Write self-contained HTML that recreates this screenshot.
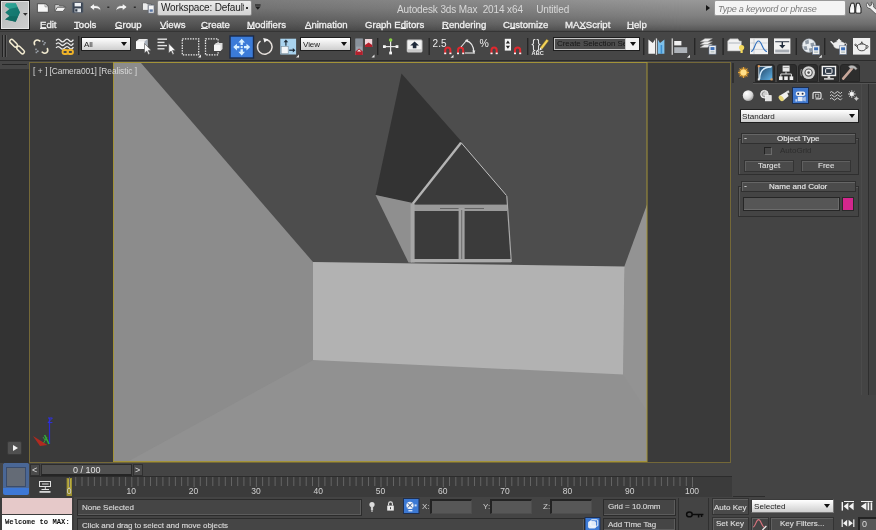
<!DOCTYPE html>
<html>
<head>
<meta charset="utf-8">
<title>Autodesk 3ds Max 2014 x64 - Untitled</title>
<style>
*{box-sizing:border-box;margin:0;padding:0}
html,body{width:876px;height:530px;overflow:hidden;background:#444}
body{font-family:"Liberation Sans",sans-serif;font-size:10px;color:#ddd;position:relative}
.abs{position:absolute}
#app{position:absolute;left:0;top:0;width:876px;height:530px;background:#444;overflow:hidden}
/* title + menu */
#titlebar{left:0;top:0;width:876px;height:32px;background:linear-gradient(#7b7b7b 0px,#737373 8px,#646464 16px,#555555 24px,#474747 30px,#3e3e3e 32px)}
#appbtn{left:0px;top:0px;width:30px;height:30px;background:linear-gradient(135deg,#b2b6b5,#c2c4c4 50%,#cfcfcf);border:1px solid #1c1c1c;box-shadow:inset 0 0 0 1px #e4e4e4}
.menu{top:19px;font-size:9.6px;letter-spacing:0;color:#f0f0f0;white-space:nowrap;line-height:12px}
.menu{z-index:3}
.menu u{text-decoration:underline;text-underline-offset:0.3px}
#ws{left:157px;top:0px;width:95px;height:15.5px;background:linear-gradient(#ececec,#d2d2d2);border:1px solid #8a8a8a;border-radius:2px;color:#1c1c1c;font-size:10px;letter-spacing:-0.15px;line-height:13px;padding-left:3px;white-space:nowrap;overflow:hidden}
#title{left:396.5px;top:3.5px;font-size:10px;letter-spacing:-0.12px;color:#d8d8d8;white-space:pre;line-height:12px}
#search{left:714px;top:0px;width:132px;height:15.5px;background:#f4f4f4;border:1px solid #999;border-radius:2px;color:#7a7a7a;font-style:italic;font-size:9px;letter-spacing:-0.2px;line-height:17px;padding-left:2.5px;white-space:nowrap;overflow:hidden}
#titlebar2{left:0;top:0;width:876px;height:32px;background:linear-gradient(#989898 0px,#8c8c8c 8px,#808080 16px,#6e6e6e 24px,#585858 30px,#454545 31px,#3e3e3e 32px);-webkit-mask-image:linear-gradient(to right,transparent 28%,#000 78%);mask-image:linear-gradient(to right,transparent 28%,#000 78%)}
.menu,#title,#vplabel,.lbl,.t{will-change:transform}
.t{display:inline-block}
.menu{-webkit-text-stroke:0.3px #f0f0f0}
.sbox .t,.btn .t,.rhead .t{-webkit-text-stroke:0.15px currentColor}
/* toolbar */
#toolbar{left:0;top:31px;width:876px;height:30px;background:#464646;border-top:1px solid #353535;border-bottom:1px solid #2b2b2b}
#tbunder{left:0;top:61px;width:876px;height:1px;background:#454545}
.dd{background:linear-gradient(#ffffff,#e2e2e2 60%,#cfcfcf);border:1px solid #1e1e1e;color:#222;font-size:8px;letter-spacing:-0.05px;line-height:13px;padding-left:2px;white-space:nowrap;overflow:hidden}
.dd:after{content:"";position:absolute;right:3px;top:4px;border-left:3px solid transparent;border-right:3px solid transparent;border-top:4px solid #111}
.sep{width:2px;background:#2a2a2a;border-right:1px solid #555}
/* viewport */
#leftstrip{left:0;top:62px;width:30px;height:401px;background:#333}
#vp{left:29px;top:62px;width:702px;height:401px;background:#3a3a3a;border:1px solid #746838}
#vplabel{left:33px;top:66px;font-size:8.4px;color:#d8d8d8;white-space:nowrap;letter-spacing:0.1px;line-height:11px}
/* command panel */
#cmd{left:733px;top:62px;width:143px;height:436px;background:#444}
.roll{border:1px solid #2f2f2f;box-shadow:inset 1px 1px 0 #5a5a5a}
.rhead{background:#4b4b4b;border:1px solid #303030;box-shadow:inset 1px 1px 0 #666;color:#e6e6e6;font-size:8px;letter-spacing:0;text-align:center;line-height:9px}
.btn{background:#4a4a4a;border:1px solid #333;box-shadow:inset 1px 1px 0 #606060;color:#dedede;font-size:8px;letter-spacing:0;text-align:center;line-height:9px}
.tab{top:64px;width:20px;height:18px;background:#2d2d2d;border:1px solid #262626;border-radius:3px 3px 0 0}
/* bottom */
.sbox{background:#454545;border:1px solid #2b2b2b;box-shadow:inset -1px -1px 0 #5c5c5c;color:#d6d6d6;font-size:8px;letter-spacing:-0.05px;line-height:12px;padding-left:4px;white-space:nowrap;overflow:hidden}
.fld{background:#575757;border-top:2px solid #232323;border-left:2px solid #232323;border-right:1px solid #4e4e4e;border-bottom:1px solid #4e4e4e}
.lbl{font-size:8px;color:#d0d0d0;line-height:10px}
.tick{font-size:8.5px;color:#cfcfcf;line-height:9px;width:30px;text-align:center}
</style>
</head>
<body>
<div id="app">

<!-- TITLE / MENU -->
<div id="titlebar" class="abs"></div>
<div id="titlebar2" class="abs"></div>
<div id="appbtn" class="abs"></div>
<div id="ws" class="abs"><div style="width:83px;overflow:hidden"><span class="t">Workspace: Default</span></div><div class="abs" style="left:88px;top:6px;width:2px;height:2px;background:#333"></div></div>
<div id="title" class="abs">Autodesk 3ds Max  2014 x64     Untitled</div>
<div id="search" class="abs"><span class="t">Type a keyword or phrase</span></div>

<div class="abs menu" style="left:40px"><u>E</u>dit</div>
<div class="abs menu" style="left:74px"><u>T</u>ools</div>
<div class="abs menu" style="left:115px"><u>G</u>roup</div>
<div class="abs menu" style="left:160px"><u>V</u>iews</div>
<div class="abs menu" style="left:201px"><u>C</u>reate</div>
<div class="abs menu" style="left:247px"><u>M</u>odifiers</div>
<div class="abs menu" style="left:305px"><u>A</u>nimation</div>
<div class="abs menu" style="left:365px">Graph E<u>d</u>itors</div>
<div class="abs menu" style="left:442px"><u>R</u>endering</div>
<div class="abs menu" style="left:503px">C<u>u</u>stomize</div>
<div class="abs menu" style="left:565px">MA<u>X</u>Script</div>
<div class="abs menu" style="left:627px"><u>H</u>elp</div>

<!-- TOOLBAR -->
<div id="toolbar" class="abs"></div>
<div id="tbunder" class="abs"></div>
<div class="abs dd" style="left:81px;top:37px;width:50px;height:14px"><span class="t">All</span></div>
<div class="abs dd" style="left:300px;top:37px;width:51px;height:14px"><span class="t">View</span></div>
<div class="abs dd" style="left:553px;top:37px;width:87px;height:14px;background:#f2f2f2;padding:0"><div class="abs" style="left:0;top:0;width:72px;height:12px;background:#4d4d4d;border:1px solid #c4c4c4;color:#161616;font-size:8px;line-height:10px;padding-left:2px;letter-spacing:-0.05px;overflow:hidden"><span class="t">Create Selection Set</span></div></div>

<svg class="abs" style="left:0;top:0;will-change:transform" width="876" height="62" viewBox="0 0 876 62">
  <defs>
    <linearGradient id="gTeal" x1="0" y1="0" x2="1" y2="1"><stop offset="0" stop-color="#2fa79a"/><stop offset="1" stop-color="#0d5f5a"/></linearGradient>
    <linearGradient id="gBox" x1="0" y1="0" x2="0" y2="1"><stop offset="0" stop-color="#ffffff"/><stop offset="1" stop-color="#d4d4d4"/></linearGradient>
    <g id="magnet"><path d="M1,7 V3.2 A2.6,2.6 0 0 1 6.2,3.2 V7" fill="none" stroke="#e0282e" stroke-width="2"/><rect x="0" y="5.6" width="2" height="1.6" fill="#f4f4f4"/><rect x="5.2" y="5.6" width="2" height="1.6" fill="#f4f4f4"/></g>
    <g id="fly"><polygon points="0,3 3,0 3,3" fill="#e8e8e8"/></g>
    <g id="doc"><rect x="0" y="0" width="7" height="8.5" fill="#f2f2f2" stroke="#6d7f99" stroke-width="0.6"/><rect x="1.5" y="1.5" width="4" height="3" fill="#3c6fb8"/><rect x="1.5" y="5.8" width="4" height="1" fill="#9aa"/></g>
  </defs>
  <!-- app logo -->
  <g>
    <polygon points="5.4,4.6 6.6,3.2 15.7,3.2 19.9,12.2 15.7,21.8 5.1,19.4 9.6,16 5.4,12.5 9.6,9 5.1,6.1" fill="url(#gTeal)"/>
    <polygon points="5.4,4.6 6.6,3.2 15.7,3.2 17.6,7.2 9.6,9 5.1,6.1" fill="#2fa596" opacity=".75"/>
    <polygon points="9.6,9 17.6,7.2 19.9,12.2 18,16.4 9.6,16 5.4,12.5" fill="#14786f" opacity=".8"/>
    <polygon points="9.6,16 18,16.4 15.7,21.8 5.1,19.4" fill="#0f6a62" opacity=".9"/>
    <polygon points="23,13 27.6,13 25.3,15.8" fill="#2e2e2e"/>
  </g>
  <!-- quick access -->
  <g>
    <path d="M37.4,3.6 H45.4 L48.4,6.4 V12.4 H37.4 Z" fill="#f6f6f6" stroke="#5c5c5c" stroke-width="1.1" stroke-linejoin="round"/>
    <path d="M45,4 V6.8 H48" fill="none" stroke="#8a8a8a" stroke-width=".8"/>
    <path d="M54.8,11.4 V4.6 H58.6 L59.6,5.8 H64 V7.4" fill="#d4d4d4" stroke="#5c5c5c" stroke-width="1" stroke-linejoin="round"/>
    <path d="M54.8,11.4 L57.4,7.2 H66 L63,11.4 Z" fill="#f4f4f4" stroke="#5c5c5c" stroke-width="1" stroke-linejoin="round"/>
    <rect x="72.4" y="2.4" width="10.6" height="10.4" rx="1" fill="#3a4452" stroke="#59626e" stroke-width=".8"/>
    <rect x="74.6" y="3" width="6.4" height="3.4" fill="#eef1f5"/>
    <rect x="74.6" y="8.4" width="6.4" height="3.8" fill="#dfe4ea"/><rect x="75.2" y="9.2" width="2.2" height="2.4" fill="#2f3946"/>
    <path d="M89.5,7 L94.5,3.3 V5.6 C98.5,5.4 101,7.2 100.8,11.4 C99.8,9.2 98,8.4 94.5,8.5 V10.8 Z" fill="#f4f4f4" stroke="#6a6a6a" stroke-width=".8"/>
    <rect x="107.3" y="6.5" width="2" height="1.5" fill="#2c2c2c"/>
    <path d="M127.3,7 L122.3,3.3 V5.6 C118.3,5.4 115.8,7.2 116,11.4 C117,9.2 118.8,8.4 122.3,8.5 V10.8 Z" fill="#f4f4f4" stroke="#6a6a6a" stroke-width=".8"/>
    <rect x="133.8" y="6.5" width="2" height="1.5" fill="#2c2c2c"/>
    <path d="M142.4,10.4 V2.8 H146.4 L147.4,4 H151.4 V10.4 Z" fill="#ececec" stroke="#5e5e5e" stroke-width=".9" stroke-linejoin="round"/>
    <rect x="148.2" y="5" width="6" height="8.2" rx=".6" fill="#f6f6f6" stroke="#5a6270" stroke-width=".9"/>
    <rect x="149.6" y="9.4" width="3.2" height="2.4" fill="#5a76a2"/>
    <rect x="255" y="4.4" width="5.6" height="1.2" fill="#1d1d1d"/><polygon points="255,6.6 260.6,6.6 257.8,9.8" fill="#1d1d1d"/>
    <polygon points="706,5 706,11 710,8" fill="#151515"/>
    <!-- binoculars -->
    <g fill="#f4f4f4" stroke="#1e1e1e" stroke-width="1" stroke-linejoin="round"><path d="M849.6,13 V8 L851.2,3.2 H854 L854.8,8 V13 Z"/><path d="M855.8,13 V8 L856.6,3.2 H859.4 L861,8 V13 Z"/></g>
    <rect x="850.6" y="9.4" width="3.2" height="3" fill="#ffffff"/><rect x="856.8" y="9.4" width="3.2" height="3" fill="#ffffff"/>
    <!-- wrench -->
    <path d="M867.4,2.6 a3.6,3.6 0 0 0 2.6,6 L876.5,14.6 V9.6 L873.4,6.8 a3.6,3.6 0 0 0 -2.2,-4.8 L871.6,5 L869.6,6.2 Z" fill="#f0f0f0" stroke="#4a4a4a" stroke-width=".8"/>
  </g>
  <!-- main toolbar grip -->
  <rect x="2" y="35" width="1" height="22" fill="#222"/><rect x="3" y="35" width="1" height="22" fill="#5a5a5a"/>
  <rect x="5" y="35" width="1" height="22" fill="#222"/><rect x="6" y="35" width="1" height="22" fill="#5a5a5a"/>
  <!-- link -->
  <g fill="none" stroke="#f3ecd2" stroke-width="1.5">
    <rect x="-1.9" y="-4.6" width="3.8" height="9.2" rx="1.9" transform="translate(13.6,43.2) rotate(-45)"/>
    <rect x="-1.9" y="-4.6" width="3.8" height="9.2" rx="1.9" transform="translate(20.6,50) rotate(-45)"/>
  </g>
  <!-- unlink -->
  <g fill="none" stroke="#f3ecd2" stroke-width="1.6" stroke-linecap="round">
    <path d="M34.6,44.6 C33.2,41 36.4,38.6 39.8,41"/>
    <path d="M47.4,48.6 C48.8,52.2 45.6,54.6 42.2,52.2"/>
  </g>
  <g fill="#9aa0a8"><rect x="42" y="40.5" width="1.6" height="1.6"/><rect x="44.2" y="42" width="1.6" height="1.6"/><rect x="43.2" y="43.6" width="1.6" height="1.6"/><rect x="35.2" y="48.6" width="1.6" height="1.6"/><rect x="37" y="50.4" width="1.6" height="1.6"/><rect x="35.6" y="51.6" width="1.6" height="1.6"/></g>
  <!-- bind to space warp -->
  <g fill="none" stroke="#ececec" stroke-width="1.3">
    <path d="M56,40.5 q2.2,-2.6 4.4,0 t4.4,0 t4.4,0 t4.2,-0.8"/>
    <path d="M56,44.2 q2.2,-2.6 4.4,0 t4.4,0 t4.4,0 t4.2,-0.8"/>
    <path d="M56,47.9 q2.2,-2.6 4.4,0 t4.4,0 t4.4,0 t4.2,-0.8"/>
  </g>
  <g fill="none" stroke="#f0b429" stroke-width="1.8"><rect x="62.5" y="50" width="5.5" height="4" rx="2"/><rect x="67.5" y="50" width="5.5" height="4" rx="2"/></g>
  <rect x="78" y="36" width="1.4" height="19" fill="#262626"/>
  <!-- select object -->
  <g>
    <polygon points="136,41.5 139,39 147.5,39 147.5,46.5 144.5,49 136,49" fill="#e9e9e9"/>
    <polygon points="136,41.5 144.5,41.5 144.5,49 136,49" fill="#f8f8f8"/>
    <polygon points="144.5,41.5 147.5,39 147.5,46.5 144.5,49" fill="#aab2bd"/>
    <polygon points="144.5,43.5 144.5,53 146.8,51 148.4,54.4 149.8,53.7 148.2,50.4 151,50.2" fill="#fafafa" stroke="#555" stroke-width=".6"/>
  </g>
  <!-- select by name -->
  <g fill="#e4e4e4"><rect x="157.5" y="38.5" width="9.5" height="1.4"/><rect x="157.5" y="41.7" width="7" height="1.4"/><rect x="157.5" y="44.9" width="9.5" height="1.4"/><rect x="157.5" y="48.1" width="7" height="1.4"/></g>
  <polygon points="168.8,43.5 168.8,53 171.1,51 172.7,54.4 174.1,53.7 172.5,50.4 175.3,50.2" fill="#fafafa" stroke="#555" stroke-width=".6"/>
  <!-- rect region -->
  <rect x="182.3" y="38.8" width="16.4" height="16" fill="none" stroke="#efefef" stroke-width="1.3" stroke-dasharray="1.4 1.2"/>
  <use href="#fly" x="198" y="54.5"/>
  <!-- window crossing -->
  <rect x="205.5" y="38.8" width="12.6" height="16" fill="none" stroke="#efefef" stroke-width="1.3" stroke-dasharray="1.4 1.2"/>
  <polygon points="214,45 216,43 222.5,43 222.5,49 220.5,51 214,51" fill="#dcdcdc"/><rect x="214" y="45" width="6.5" height="6" fill="#f6f6f6"/>
  <!-- move (active) -->
  <rect x="230" y="36" width="23.5" height="22" fill="#3b7bd8" stroke="#1b2a48" stroke-width="1.4"/>
  <g fill="#d9f1ff">
    <polygon points="241.7,38.8 245,42.5 242.9,42.5 242.9,45 240.5,45 240.5,42.5 238.4,42.5"/>
    <polygon points="241.7,55.4 245,51.7 242.9,51.7 242.9,49.2 240.5,49.2 240.5,51.7 238.4,51.7"/>
    <polygon points="233.2,47.1 236.9,43.8 236.9,45.9 239.4,45.9 239.4,48.3 236.9,48.3 236.9,50.4"/>
    <polygon points="250.2,47.1 246.5,43.8 246.5,45.9 244,45.9 244,48.3 246.5,48.3 246.5,50.4"/>
    <rect x="240.7" y="46.1" width="2" height="2"/>
  </g>
  <!-- rotate -->
  <path d="M266.5,39.8 A7.3,7.3 0 1 1 260.5,41" fill="none" stroke="#e6e0dc" stroke-width="1.5"/>
  <polygon points="263.2,38 268.6,39.3 264.4,42.6" fill="#f4f4f4"/>
  <!-- scale -->
  <rect x="280.3" y="38.7" width="15.8" height="15.8" fill="#a9d3ee"/>
  <rect x="281.2" y="46.5" width="7" height="7.2" fill="#f3f6f8" stroke="#7d8f9c" stroke-width=".6"/>
  <g fill="#1e2a36"><rect x="285.3" y="41.5" width="1.2" height="4.2"/><polygon points="283.6,42.2 285.9,39.6 288.2,42.2"/><rect x="289.2" y="49.6" width="4.2" height="1.2"/><polygon points="292.8,47.9 295.4,50.2 292.8,52.5"/></g>
  <use href="#fly" x="296" y="54.5"/>
  <!-- use pivot center -->
  <rect x="355.4" y="38.6" width="7.4" height="16.4" fill="#9aa3ad"/><rect x="355.4" y="38.6" width="7.4" height="8" fill="#7e8791" opacity=".6"/>
  <polygon points="355.4,55 355.4,51.5 359.1,48.5 362.8,51.5 362.8,55" fill="#b3202c"/><polygon points="357,51.5 359.1,49.6 361.2,51.5" fill="#f2f2f2"/>
  <rect x="365" y="39" width="7.2" height="8" fill="#f0d5da"/><polygon points="365,47 365,45 368.6,42.5 372.2,45 372.2,47" fill="#b3202c"/>
  <use href="#fly" x="371.5" y="54.5"/>
  <rect x="377" y="38" width="1.4" height="17" fill="#262626"/>
  <!-- manipulate -->
  <g stroke="#e8e8e8" stroke-width="1.2"><line x1="384" y1="46.6" x2="397.5" y2="46.6"/><line x1="390.6" y1="40" x2="390.6" y2="53.5"/></g>
  <g fill="#f6f6f6"><rect x="383" y="45.2" width="2.8" height="2.8"/><rect x="395.6" y="45.2" width="2.8" height="2.8"/><rect x="389.2" y="51.6" width="2.8" height="2.8"/></g>
  <circle cx="390.6" cy="40" r="1.8" fill="#8bd14a"/>
  <!-- keyboard shortcut override -->
  <rect x="407" y="39.8" width="15.2" height="12.4" rx="1.2" fill="#f2f2f2" stroke="#9a9a9a" stroke-width=".8"/><rect x="407.4" y="49.2" width="14.4" height="2.6" fill="#c9c9c9"/>
  <polygon points="414.6,41.6 419,45.6 416.4,45.6 416.4,48.2 412.8,48.2 412.8,45.6 410.2,45.6" fill="#1f2a3a"/>
  <rect x="428.5" y="38" width="1.4" height="17" fill="#262626"/>
  <!-- snaps -->
  <text x="432.6" y="46.6" font-family="Liberation Sans, sans-serif" font-size="10" fill="#ececec">2.5</text>
  <use href="#magnet" x="444.2" y="47"/>
  <use href="#fly" x="450.5" y="54.8"/>
  <use href="#magnet" x="457" y="47"/>
  <g fill="none" stroke="#e8e8e8" stroke-width="1.1"><path d="M461,47 L467.3,39.5"/><path d="M465,53 H475"/><path d="M466.2,40.6 C471,42 473.6,46.5 473.8,52"/></g><polygon points="472.2,50.6 475.4,50.6 473.8,53.4" fill="#e8e8e8"/><polygon points="465,40 468.4,39.6 467.4,42.4" fill="#e8e8e8"/>
  <text x="479.6" y="47" font-family="Liberation Sans, sans-serif" font-size="10.5" fill="#ececec">%</text>
  <use href="#magnet" x="490.5" y="47"/>
  <rect x="504.8" y="38.8" width="6.2" height="11.8" fill="#f4f4f4"/>
  <polygon points="505.8,43.6 510,43.6 507.9,40.6" fill="#222"/><polygon points="505.8,45.8 510,45.8 507.9,48.8" fill="#222"/>
  <use href="#magnet" x="514" y="47"/>
  <rect x="527" y="38" width="1.4" height="17" fill="#262626"/>
  <!-- named selection sets -->
  <text x="531.4" y="48" font-family="Liberation Sans, sans-serif" font-size="12" fill="#ececec" letter-spacing="1">{}</text>
  <text x="531.6" y="55.4" font-family="Liberation Sans, sans-serif" font-size="5.6" font-weight="bold" fill="#ececec">ABC</text>
  <path d="M540.2,47.6 L546.6,39.2 L548.6,40.8 L542.2,49.2 Z" fill="#f2d35a" stroke="#8a6f1c" stroke-width=".4"/><polygon points="540.2,47.6 542.2,49.2 539.4,50.4" fill="#f4f4f4"/>
  <rect x="643" y="38" width="1.4" height="17" fill="#262626"/>
  <!-- mirror -->
  <polygon points="648.4,39.4 652.8,43 655,39.4 655,53.8 648.4,53.8" fill="#f2f2f2"/>
  <rect x="655.8" y="38.4" width="1.3" height="16.4" fill="#d8d8d8"/>
  <polygon points="664.4,39.4 660,43 657.8,39.4 657.8,53.8 664.4,53.8" fill="#7ec0ea"/><rect x="660.6" y="45" width="1.6" height="8.8" fill="#3d8fcf"/>
  <!-- align -->
  <rect x="671.6" y="38.4" width="1.3" height="16.4" fill="#d0d0d0"/>
  <rect x="674.2" y="41" width="7.2" height="4.4" fill="#f1f1f1"/><rect x="674.2" y="47.2" width="13" height="5.8" fill="#aeb3b9"/>
  <use href="#fly" x="687" y="54.8"/>
  <rect x="694" y="38" width="1.4" height="17" fill="#262626"/>
  <!-- layers -->
  <g fill="#f0f0f0" stroke="#8c8c8c" stroke-width=".5"><polygon points="700,47.4 705,44.2 712.4,44.2 707.4,47.4"/><polygon points="700,44.6 705,41.4 712.4,41.4 707.4,44.6"/><polygon points="700,41.8 705,38.6 712.4,38.6 707.4,41.8"/></g>
  <use href="#doc" x="709" y="45.6"/>
  <rect x="722.4" y="38" width="1.4" height="17" fill="#262626"/>
  <!-- ribbon -->
  <path d="M727.6,51 V41 L730,38.8 H738 L739.4,41 H741.4 V51 Z" fill="#f1f1f1" stroke="#9a9a9a" stroke-width=".6"/><rect x="728.6" y="42.4" width="11.8" height="1.2" fill="#b9bec6"/>
  <circle cx="741.6" cy="47.6" r="2.6" fill="#f4d95c"/><rect x="740.5" y="49.8" width="2.2" height="3.2" fill="#f4d95c"/>
  <!-- curve editor -->
  <rect x="750" y="38.2" width="18" height="16" fill="#f1f1f1"/>
  <g stroke="#b7bcc4" stroke-width=".6"><line x1="754" y1="38.6" x2="754" y2="54"/><line x1="750.4" y1="43" x2="767.6" y2="43"/><line x1="750.4" y1="49.4" x2="767.6" y2="49.4"/></g>
  <path d="M751,51.5 C754.5,51.5 755,41 758.5,41 C762,41 762.5,51.5 767,51.5" fill="none" stroke="#2f6fbe" stroke-width="1.1"/>
  <!-- schematic -->
  <rect x="774" y="38.4" width="16.4" height="15.4" fill="#f1f1f1"/>
  <rect x="775.2" y="41" width="14" height="1.3" fill="#59606c"/><rect x="775.2" y="49.6" width="14" height="2.8" fill="#a7acb3"/><rect x="781.6" y="42" width="1.4" height="3.4" fill="#1f2a3a"/><polygon points="779.2,45 785.4,45 782.3,48.4" fill="#1f2a3a"/>
  <rect x="795.6" y="38" width="1.4" height="17" fill="#262626"/>
  <!-- material editor -->
  <circle cx="809" cy="45.6" r="6.8" fill="#e9edf1" stroke="#9aa3ad" stroke-width=".6"/>
  <g fill="#8f9aa6"><polygon points="805,41 808.6,39.6 809,43.4 805.6,44.6"/><polygon points="810.4,43.2 813.8,42.4 814.6,46 811,46.8"/><polygon points="803.4,46.4 806.6,46 807.6,49.8 804.6,50"/><polygon points="808.8,48.4 812,48 812.6,51.4 809.6,52"/></g>
  <use href="#doc" x="812.6" y="45.8"/>
  <use href="#fly" x="818.8" y="54.8"/>
  <rect x="824" y="38" width="1.4" height="17" fill="#262626"/>
  <!-- render setup teapot -->
  <g id="teapot"><path d="M833.4,44.6 C833,42.6 835.6,41.6 839,41.6 C842.4,41.6 845,42.6 844.6,44.6 C844.6,47.2 843,48.8 839,48.8 C835,48.8 833.4,47.2 833.4,44.6 Z" fill="#eeeeee" stroke="#9a9a9a" stroke-width=".5"/><path d="M833.6,45.4 L830,41.6 L831.4,41 L834.2,43.4 Z" fill="#eeeeee"/><path d="M844.4,43.4 C847.4,42.4 847.4,46.6 844,46.6" fill="none" stroke="#eeeeee" stroke-width="1"/><ellipse cx="839" cy="41" rx="2.6" ry="1" fill="#f6f6f6"/><circle cx="839" cy="39.6" r=".9" fill="#f6f6f6"/></g>
  <use href="#doc" x="839.6" y="45.8"/>
  <!-- rendered frame window -->
  <rect x="853" y="38" width="17.2" height="16.6" fill="#efefef"/>
  <g fill="none" stroke="#3a3a3a" stroke-width=".9"><path d="M857.4,46.6 C857,44.8 859.2,44 861.8,44 C864.4,44 866.6,44.8 866.2,46.6 C866.2,49.2 864.8,50.8 861.8,50.8 C858.8,50.8 857.4,49.2 857.4,46.6 Z"/><path d="M857.4,47 L854.6,44.8 L855.4,44.2 L857.6,45.6"/><path d="M866.2,45.6 C868.8,44.8 868.8,48.4 866,48.4"/><path d="M860.2,43.8 Q861.8,42 863.4,43.8"/></g>
  <circle cx="861.8" cy="42.2" r=".8" fill="#3a3a3a"/>
</svg>

<!-- VIEWPORT -->
<div id="leftstrip" class="abs"></div>
<div class="abs" style="left:0;top:61px;width:29px;height:8px;background:#464646"></div>
<div class="abs" style="left:2px;top:64px;width:25px;height:1px;background:#262626"></div>
<div class="abs" style="left:7px;top:441px;width:15px;height:14px;background:#505050;border:1px solid #3a3a3a;border-radius:2px"></div>
<div class="abs" style="left:13px;top:445px;width:0;height:0;border-left:5px solid #f2f2f2;border-top:3.5px solid transparent;border-bottom:3.5px solid transparent"></div>
<div id="vp" class="abs"></div>
<svg class="abs" style="left:0;top:0" width="876" height="530" viewBox="0 0 876 530">
  <g id="scene">
    <rect x="114" y="63" width="533" height="398" fill="#4d4d4d"/>
    <!-- floor (extended under walls) -->
    <polygon points="114,461 114,400 313,300 647,300 647,461" fill="#919191"/>
    <!-- left wall -->
    <polygon points="114,63 141,63 313,262 313.5,360 129,461 114,461" fill="#8c8c8c"/>
    <!-- back wall -->
    <polygon points="313,262 625,266.5 623.5,374.5 313,360" fill="#b2b2b2"/>
    <!-- right wall -->
    <polygon points="647,204.5 624.5,266 623,374.5 647,411.5" fill="#939393"/>
    <!-- dormer -->
    <polygon points="401.5,73.5 461.5,141.5 413,204 375.5,195" fill="#333333"/>
    <polygon points="375.5,195 413,203 412,262.5 408.5,262.5" fill="#8f8f8f"/>
    <polygon points="461,142 506.5,195.5 511.5,262.2 411,262.2 412,203" fill="#3b3b3b"/>
    <polyline points="412.6,204 461,142.8" fill="none" stroke="#b4b4b4" stroke-width="2.4"/>
    <polyline points="461,142.5 506.5,195.5" fill="none" stroke="#c2c2c2" stroke-width="1"/>
    <polyline points="506.8,196 511.3,262" fill="none" stroke="#a8a8a8" stroke-width="1.2"/>
    <rect x="411" y="204.6" width="96" height="6.4" fill="#9a9a9a"/>
    <rect x="440" y="208" width="44" height="1" fill="#646464"/>
    <rect x="410.6" y="204" width="4" height="58.4" fill="#a6a6a6"/>
    <rect x="458.6" y="208" width="6" height="54" fill="#a2a2a2"/>
    <rect x="461.2" y="210" width="1" height="50" fill="#6a6a6a"/>
    <rect x="411" y="259" width="100" height="3.4" fill="#ababab"/>
  </g>
  <g id="gizmo">
    <line x1="49.5" y1="418" x2="49.5" y2="444" stroke="#2a2ad0" stroke-width="1.2"/>
    <path d="M48,418 H52.4 L48,422.6 H52.4" fill="none" stroke="#3030e0" stroke-width="1"/>
    <polygon points="33,436 47.5,445 40,446" fill="#b02a20"/>
    <line x1="49" y1="444" x2="44.6" y2="435" stroke="#2fae3a" stroke-width="1.6"/>
    <path d="M43,437 L45,440 M47,437 L43.6,443" stroke="#2fae3a" stroke-width=".9" fill="none"/>
  </g>
  <!-- safe frame -->
  <rect x="113.5" y="62.5" width="533.5" height="399" fill="none" stroke="#a39338" stroke-width="1"/>
</svg>
<div id="vplabel" class="abs"><span class="abs" style="left:0">[ + ]</span><span class="abs" style="left:16.5px;letter-spacing:-0.1px">[Camera001]</span><span class="abs" style="left:66px;letter-spacing:-0.05px">[Realistic ]</span></div>

<!-- COMMAND PANEL -->
<div id="cmd" class="abs"></div>

<!-- command panel tabs -->
<div class="abs" style="left:753px;top:82px;width:123px;height:1px;background:#2b2b2b"></div>
<div class="abs" style="left:753px;top:83px;width:123px;height:1px;background:#555"></div>
<div class="abs" style="left:732px;top:63px;width:2px;height:20px;background:#303030"></div>
<div class="abs" style="left:861px;top:84px;width:1px;height:311px;background:#4b4b4b"></div>
<div class="abs" style="left:868px;top:84px;width:1px;height:311px;background:#2e2e2e"></div>
<div class="abs" style="left:869px;top:84px;width:7px;height:311px;background:#414141"></div>
<div class="abs tab" style="left:755px"></div>
<div class="abs tab" style="left:777px"></div>
<div class="abs tab" style="left:798px"></div>
<div class="abs tab" style="left:819px"></div>
<div class="abs tab" style="left:840px"></div>
<div class="abs" style="left:792px;top:87px;width:17px;height:17px;background:#4179cf;border:1px solid #1d2e4e"></div>
<svg class="abs" style="left:730px;top:58px" width="146" height="50" viewBox="730 58 146 50">
  <defs>
    <radialGradient id="gStar"><stop offset="0" stop-color="#fff1b0"/><stop offset=".45" stop-color="#f2b43a"/><stop offset="1" stop-color="#c8801c" stop-opacity=".0"/></radialGradient>
    <radialGradient id="gSph" cx=".35" cy=".3" r=".8"><stop offset="0" stop-color="#ffffff"/><stop offset=".6" stop-color="#dcdcdc"/><stop offset="1" stop-color="#8f8f8f"/></radialGradient>
    <linearGradient id="gCurve" x1="0" y1="0" x2="1" y2="1"><stop offset="0" stop-color="#1c3b5a"/><stop offset="1" stop-color="#5fb2e6"/></linearGradient>
  </defs>
  <!-- create (star) -->
  <circle cx="743.5" cy="72.5" r="6" fill="url(#gStar)"/>
  <g stroke="#eea93a" stroke-width="1" opacity=".9"><line x1="743.5" y1="67" x2="743.5" y2="78"/><line x1="738" y1="72.5" x2="749" y2="72.5"/><line x1="739.6" y1="68.6" x2="747.4" y2="76.4"/><line x1="747.4" y1="68.6" x2="739.6" y2="76.4"/></g>
  <circle cx="743.5" cy="72.5" r="3" fill="#ffe08a"/>
  <!-- modify -->
  <rect x="758.4" y="66" width="14" height="14" fill="url(#gCurve)"/>
  <path d="M759.6,79 C759.6,71 764,67 771.4,67" fill="none" stroke="#d9efff" stroke-width="1.4"/>
  <path d="M758.8,66.4 H772 M758.8,66.4 V79.6" stroke="#e9e9e9" stroke-width=".8" fill="none"/>
  <rect x="757.8" y="65.2" width="2" height="2" fill="#e8a05a"/><rect x="770.6" y="78.4" width="2" height="2" fill="#e8a05a"/><rect x="757.8" y="78.4" width="2" height="2" fill="#eee"/>
  <!-- hierarchy -->
  <rect x="782.6" y="65.6" width="7" height="6" fill="#e6e6e6"/><rect x="783.4" y="67" width="5.4" height=".9" fill="#999"/>
  <g stroke="#dcdcdc" stroke-width="1" fill="none"><path d="M786,71.6 V74 M780.8,77 V74 H791.4 V77"/></g>
  <g fill="#ededed"><rect x="779" y="76.4" width="3.6" height="3.6"/><rect x="784.2" y="76.4" width="3.6" height="3.6"/><rect x="789.6" y="76.4" width="3.6" height="3.6"/></g>
  <!-- motion -->
  <circle cx="808.6" cy="72.6" r="6.4" fill="#d2d2d2"/><circle cx="808.6" cy="72.6" r="4.2" fill="#5a5a5a"/><circle cx="808.6" cy="72.6" r="3" fill="#ededed"/><circle cx="808.6" cy="72.6" r="1.3" fill="#555"/>
  <path d="M801.4,69 Q799.6,72.6 801.4,76.2" stroke="#9a9a9a" stroke-width=".8" fill="none"/>
  <!-- display -->
  <rect x="821.6" y="65.8" width="14.6" height="10.4" fill="#f0f0f0"/><rect x="823" y="67.2" width="11.8" height="7.6" fill="#2f3a48"/>
  <rect x="825.6" y="68.6" width="6.4" height="4.8" rx="1" fill="none" stroke="#f0f0f0" stroke-width="1"/>
  <rect x="827.6" y="76.2" width="2.6" height="2" fill="#dcdcdc"/><rect x="824" y="78.2" width="9.8" height="1.4" fill="#e6e6e6"/>
  <!-- utilities (hammer) -->
  <path d="M843.2,78.6 L852.2,68.2" stroke="#c8a79a" stroke-width="2.6" stroke-linecap="round"/>
  <path d="M848.6,66.4 C851.4,64.6 855.4,65.6 857.2,68.8 L855.4,69.8 C854.2,68 852.4,67.6 850.4,68.6 Z" fill="#bcbcbc" stroke="#8a8a8a" stroke-width=".5"/>
  <!-- sub row: geometry -->
  <circle cx="748.2" cy="95.6" r="5.4" fill="url(#gSph)"/>
  <!-- shapes -->
  <circle cx="764.4" cy="94.2" r="3.8" fill="#cfcfcf" stroke="#f0f0f0" stroke-width="1"/><path d="M764.6,91.8 a2.4,2.4 0 1 0 2,3.8" fill="none" stroke="#8a8a8a" stroke-width=".9"/>
  <rect x="765.6" y="95.6" width="5.6" height="5.2" fill="#e2e2e2" stroke="#f6f6f6" stroke-width=".8"/>
  <!-- lights -->
  <path d="M779,96 L786.6,91.4 L788.6,96 L783.4,100.6 Z" fill="#f1f1f1"/><ellipse cx="781.2" cy="98.4" rx="2" ry="3.2" transform="rotate(-40 781.2 98.4)" fill="#e6d678"/><path d="M786.2,91.6 L788.4,90.2 L789.6,92.2 L787.6,93.6 Z" fill="#dcdcdc"/>
  <!-- cameras (active) -->
  <rect x="795.8" y="91.6" width="9.4" height="4.4" rx="1.8" fill="#f2f2f2"/><circle cx="798.2" cy="93.8" r="1" fill="#1c2f58"/><circle cx="802.6" cy="93.8" r="1" fill="#1c2f58"/>
  <rect x="797.8" y="96.8" width="4.8" height="4.4" fill="#e4ebf6"/><polygon points="802.8,97.8 805.8,96.6 805.8,101.4 802.8,100.4" fill="#a9c0e6"/><rect x="795.4" y="99.2" width="1.8" height="2.4" fill="#c3d3ee"/>
  <!-- helpers -->
  <path d="M813,99 V93.8 Q813,92.4 814.4,92.4 H819.4 Q821,92.4 821,94 V97.2 Q821,98.8 819.4,98.8 H815.6" fill="none" stroke="#e0e0e0" stroke-width="1.2"/><rect x="815.4" y="94.2" width="3.4" height="3" fill="none" stroke="#b8b8b8" stroke-width=".8"/><rect x="822.2" y="98.6" width="1.1" height="1.1" fill="#c4c4c4"/>
  <!-- space warps -->
  <g fill="none" stroke="#cdcdcd" stroke-width="1"><path d="M830,92.6 q1.5,-2.2 3,0 t3,0 t3,0 t3,-0.6"/><path d="M830,95.8 q1.5,-2.2 3,0 t3,0 t3,0 t3,-0.6"/><path d="M830,99 q1.5,-2.2 3,0 t3,0 t3,0 t3,-0.6"/></g>
  <!-- systems -->
  <g stroke="#e2e2e2" stroke-width=".9"><line x1="851.8" y1="90.2" x2="851.8" y2="97.8"/><line x1="848" y1="94" x2="855.6" y2="94"/><line x1="849.1" y1="91.3" x2="854.5" y2="96.7"/><line x1="854.5" y1="91.3" x2="849.1" y2="96.7"/></g><circle cx="851.8" cy="94" r="2" fill="#f4f4f4"/>
  <circle cx="856.4" cy="98.6" r="1.5" fill="#d2d2d2"/><g stroke="#cacaca" stroke-width=".7"><line x1="856.4" y1="96.2" x2="856.4" y2="101"/><line x1="854" y1="98.6" x2="858.8" y2="98.6"/></g>
</svg>
<div class="abs dd" style="left:740px;top:109px;width:119px;height:14px;font-size:8.1px;letter-spacing:0;line-height:13px;padding-left:1px"><span class="t">Standard</span></div>
<!-- Object Type rollout -->
<div class="abs roll" style="left:738px;top:138px;width:121px;height:37px"></div>
<div class="abs rhead" style="left:741px;top:133px;width:115px;height:11px"><span class="t">Object Type</span></div>
<div class="abs" style="left:744px;top:133px;font-size:9px;line-height:10px;color:#e6e6e6">-</div>
<div class="abs" style="left:764px;top:147px;width:8px;height:8px;background:#484848;border:1px solid #222;border-right-color:#6a6a6a;border-bottom-color:#6a6a6a"></div>
<div class="abs" style="left:780px;top:146px;font-size:8px;letter-spacing:0;line-height:10px;color:#2d2d2d;will-change:transform">AutoGrid</div>
<div class="abs btn" style="left:744px;top:160px;width:50px;height:12px"><span class="t">Target</span></div>
<div class="abs btn" style="left:801px;top:160px;width:50px;height:12px"><span class="t">Free</span></div>
<!-- Name and Color rollout -->
<div class="abs roll" style="left:738px;top:186px;width:121px;height:31px"></div>
<div class="abs rhead" style="left:741px;top:181px;width:115px;height:11px"><span class="t">Name and Color</span></div>
<div class="abs" style="left:744px;top:181px;font-size:9px;line-height:10px;color:#e6e6e6">-</div>
<div class="abs" style="left:743px;top:197px;width:97px;height:14px;background:#565656;border:1px solid #262626;box-shadow:inset -1px -1px 0 #6c6c6c"></div>
<div class="abs" style="left:842px;top:197px;width:12px;height:14px;background:#d3278d;border:1px solid #2a2a2a"></div>

<!-- BOTTOM -->
<!-- time slider -->
<div class="abs" style="left:0;top:463px;width:733px;height:35px;background:#444"></div>
<div class="abs" style="left:3px;top:463px;width:26px;height:32px;background:#3e78d6;border-radius:3px 3px 2px 2px"></div>
<div class="abs" style="left:3px;top:463px;width:26px;height:25px;background:#4a6796;border-radius:3px 3px 0 0"></div>
<div class="abs" style="left:6px;top:467px;width:20px;height:20px;background:#646b76;border:1px solid #3a4c6c"></div>
<div class="abs" style="left:30px;top:464px;width:10px;height:12px;background:#4a4a4a;border:1px solid #303030;color:#ddd;font-size:9px;line-height:10px;text-align:center"><span class="t">&lt;</span></div>
<div class="abs" style="left:41px;top:464px;width:91px;height:12px;background:#515151;border:1px solid #2c2c2c;border-bottom:2px solid #252525;color:#e2e2e2;font-size:9px;line-height:11px;text-align:center"><span class="t">0 / 100</span></div>
<div class="abs" style="left:133px;top:464px;width:10px;height:12px;background:#4a4a4a;border:1px solid #303030;color:#ddd;font-size:9px;line-height:10px;text-align:center"><span class="t">&gt;</span></div>
<div class="abs" style="left:30px;top:476px;width:702px;height:21px;background:#3b3b3b;border-top:1px solid #2c2c2c"></div>
<svg class="abs" style="left:0;top:462px;will-change:transform" width="876" height="68" viewBox="0 462 876 68" font-family="Liberation Sans, sans-serif" font-size="8.5" fill="#d2d2d2">
  <rect x="66.6" y="478" width="5.4" height="18" fill="#9b8f2e"/><rect x="67.6" y="479" width="3.4" height="9" fill="#b8ab45"/>
  <rect x="69.0" y="477" width="1" height="10" fill="#646464"/><rect x="75.2" y="477" width="1" height="9" fill="#646464"/><rect x="81.5" y="477" width="1" height="9" fill="#646464"/><rect x="87.7" y="477" width="1" height="9" fill="#646464"/><rect x="93.9" y="477" width="1" height="9" fill="#646464"/><rect x="100.2" y="477" width="1" height="9" fill="#646464"/><rect x="106.4" y="477" width="1" height="9" fill="#646464"/><rect x="112.6" y="477" width="1" height="9" fill="#646464"/><rect x="118.8" y="477" width="1" height="9" fill="#646464"/><rect x="125.1" y="477" width="1" height="9" fill="#646464"/><rect x="131.3" y="477" width="1" height="10" fill="#646464"/><rect x="137.5" y="477" width="1" height="9" fill="#646464"/><rect x="143.8" y="477" width="1" height="9" fill="#646464"/><rect x="150.0" y="477" width="1" height="9" fill="#646464"/><rect x="156.2" y="477" width="1" height="9" fill="#646464"/><rect x="162.4" y="477" width="1" height="9" fill="#646464"/><rect x="168.7" y="477" width="1" height="9" fill="#646464"/><rect x="174.9" y="477" width="1" height="9" fill="#646464"/><rect x="181.1" y="477" width="1" height="9" fill="#646464"/><rect x="187.4" y="477" width="1" height="9" fill="#646464"/><rect x="193.6" y="477" width="1" height="10" fill="#646464"/><rect x="199.8" y="477" width="1" height="9" fill="#646464"/><rect x="206.1" y="477" width="1" height="9" fill="#646464"/><rect x="212.3" y="477" width="1" height="9" fill="#646464"/><rect x="218.5" y="477" width="1" height="9" fill="#646464"/><rect x="224.8" y="477" width="1" height="9" fill="#646464"/><rect x="231.0" y="477" width="1" height="9" fill="#646464"/><rect x="237.2" y="477" width="1" height="9" fill="#646464"/><rect x="243.4" y="477" width="1" height="9" fill="#646464"/><rect x="249.7" y="477" width="1" height="9" fill="#646464"/><rect x="255.9" y="477" width="1" height="10" fill="#646464"/><rect x="262.1" y="477" width="1" height="9" fill="#646464"/><rect x="268.4" y="477" width="1" height="9" fill="#646464"/><rect x="274.6" y="477" width="1" height="9" fill="#646464"/><rect x="280.8" y="477" width="1" height="9" fill="#646464"/><rect x="287.1" y="477" width="1" height="9" fill="#646464"/><rect x="293.3" y="477" width="1" height="9" fill="#646464"/><rect x="299.5" y="477" width="1" height="9" fill="#646464"/><rect x="305.7" y="477" width="1" height="9" fill="#646464"/><rect x="312.0" y="477" width="1" height="9" fill="#646464"/><rect x="318.2" y="477" width="1" height="10" fill="#646464"/><rect x="324.4" y="477" width="1" height="9" fill="#646464"/><rect x="330.7" y="477" width="1" height="9" fill="#646464"/><rect x="336.9" y="477" width="1" height="9" fill="#646464"/><rect x="343.1" y="477" width="1" height="9" fill="#646464"/><rect x="349.4" y="477" width="1" height="9" fill="#646464"/><rect x="355.6" y="477" width="1" height="9" fill="#646464"/><rect x="361.8" y="477" width="1" height="9" fill="#646464"/><rect x="368.0" y="477" width="1" height="9" fill="#646464"/><rect x="374.3" y="477" width="1" height="9" fill="#646464"/><rect x="380.5" y="477" width="1" height="10" fill="#646464"/><rect x="386.7" y="477" width="1" height="9" fill="#646464"/><rect x="393.0" y="477" width="1" height="9" fill="#646464"/><rect x="399.2" y="477" width="1" height="9" fill="#646464"/><rect x="405.4" y="477" width="1" height="9" fill="#646464"/><rect x="411.7" y="477" width="1" height="9" fill="#646464"/><rect x="417.9" y="477" width="1" height="9" fill="#646464"/><rect x="424.1" y="477" width="1" height="9" fill="#646464"/><rect x="430.3" y="477" width="1" height="9" fill="#646464"/><rect x="436.6" y="477" width="1" height="9" fill="#646464"/><rect x="442.8" y="477" width="1" height="10" fill="#646464"/><rect x="449.0" y="477" width="1" height="9" fill="#646464"/><rect x="455.3" y="477" width="1" height="9" fill="#646464"/><rect x="461.5" y="477" width="1" height="9" fill="#646464"/><rect x="467.7" y="477" width="1" height="9" fill="#646464"/><rect x="474.0" y="477" width="1" height="9" fill="#646464"/><rect x="480.2" y="477" width="1" height="9" fill="#646464"/><rect x="486.4" y="477" width="1" height="9" fill="#646464"/><rect x="492.6" y="477" width="1" height="9" fill="#646464"/><rect x="498.9" y="477" width="1" height="9" fill="#646464"/><rect x="505.1" y="477" width="1" height="10" fill="#646464"/><rect x="511.3" y="477" width="1" height="9" fill="#646464"/><rect x="517.6" y="477" width="1" height="9" fill="#646464"/><rect x="523.8" y="477" width="1" height="9" fill="#646464"/><rect x="530.0" y="477" width="1" height="9" fill="#646464"/><rect x="536.2" y="477" width="1" height="9" fill="#646464"/><rect x="542.5" y="477" width="1" height="9" fill="#646464"/><rect x="548.7" y="477" width="1" height="9" fill="#646464"/><rect x="554.9" y="477" width="1" height="9" fill="#646464"/><rect x="561.2" y="477" width="1" height="9" fill="#646464"/><rect x="567.4" y="477" width="1" height="10" fill="#646464"/><rect x="573.6" y="477" width="1" height="9" fill="#646464"/><rect x="579.9" y="477" width="1" height="9" fill="#646464"/><rect x="586.1" y="477" width="1" height="9" fill="#646464"/><rect x="592.3" y="477" width="1" height="9" fill="#646464"/><rect x="598.6" y="477" width="1" height="9" fill="#646464"/><rect x="604.8" y="477" width="1" height="9" fill="#646464"/><rect x="611.0" y="477" width="1" height="9" fill="#646464"/><rect x="617.2" y="477" width="1" height="9" fill="#646464"/><rect x="623.5" y="477" width="1" height="9" fill="#646464"/><rect x="629.7" y="477" width="1" height="10" fill="#646464"/><rect x="635.9" y="477" width="1" height="9" fill="#646464"/><rect x="642.2" y="477" width="1" height="9" fill="#646464"/><rect x="648.4" y="477" width="1" height="9" fill="#646464"/><rect x="654.6" y="477" width="1" height="9" fill="#646464"/><rect x="660.9" y="477" width="1" height="9" fill="#646464"/><rect x="667.1" y="477" width="1" height="9" fill="#646464"/><rect x="673.3" y="477" width="1" height="9" fill="#646464"/><rect x="679.5" y="477" width="1" height="9" fill="#646464"/><rect x="685.8" y="477" width="1" height="9" fill="#646464"/><rect x="692.0" y="477" width="1" height="10" fill="#646464"/>
  <text x="69.0" y="494" text-anchor="middle">0</text><text x="131.3" y="494" text-anchor="middle">10</text><text x="193.6" y="494" text-anchor="middle">20</text><text x="255.9" y="494" text-anchor="middle">30</text><text x="318.2" y="494" text-anchor="middle">40</text><text x="380.5" y="494" text-anchor="middle">50</text><text x="442.8" y="494" text-anchor="middle">60</text><text x="505.1" y="494" text-anchor="middle">70</text><text x="567.4" y="494" text-anchor="middle">80</text><text x="629.7" y="494" text-anchor="middle">90</text><text x="692.0" y="494" text-anchor="middle">100</text>
  <!-- key mode icon -->
  <g fill="none" stroke="#e2e2e2" stroke-width="1"><rect x="39.5" y="481.5" width="11" height="5"/><path d="M42,484 H48.6 M45.3,486.5 V489.5 M41.5,489.5 H49"/></g>
  <rect x="39.5" y="491" width="11" height="1.8" fill="#d6d6d6"/>
  <!-- bulb -->
  <circle cx="372" cy="504.6" r="2.6" fill="#dcdcdc"/><rect x="370.9" y="506.6" width="2.2" height="3.6" fill="#cfcfcf"/><rect x="371.4" y="510.4" width="1.2" height="1.4" fill="#eee"/>
  <!-- lock -->
  <path d="M388.6,505.6 V503.8 A1.9,1.9 0 0 1 392.4,503.8 V505.6" fill="none" stroke="#e6e6e6" stroke-width="1.1"/><rect x="387.2" y="505.6" width="6.6" height="5" fill="#ececec"/><rect x="390" y="507.2" width="1" height="2" fill="#444"/>
  <!-- abs/offset toggle -->
  <rect x="403.5" y="498.5" width="15.5" height="15" fill="#3c79d4" stroke="#1e2f50" stroke-width="1"/>
  <circle cx="410" cy="505.4" r="3.6" fill="#f0f4fa"/><path d="M407.8,503.2 L412.2,507.6 M412.2,503.2 L407.8,507.6" stroke="#2a4a80" stroke-width="1"/><rect x="414.6" y="504.4" width="2" height="2" fill="#cfe0f8"/><rect x="408.4" y="510" width="4" height="1.4" fill="#cfe0f8"/>
  <!-- add time tag icon -->
  <rect x="585" y="517.5" width="15" height="13" fill="#3c79d4" stroke="#1e2f50" stroke-width="1"/>
  <rect x="588.6" y="521.6" width="7" height="6.4" rx="1" fill="#dfe9f7" stroke="#f6f9fd" stroke-width=".8"/><rect x="590.8" y="519.8" width="7" height="6.4" rx="1" fill="none" stroke="#f6f9fd" stroke-width="1"/>
  <!-- key icon -->
  <g fill="none" stroke="#0c0c0c" stroke-width="1.5"><ellipse cx="689.4" cy="514.4" rx="2.8" ry="2.4"/><path d="M692.2,514.4 H703.4 M698.6,514.4 V517.4 M701.6,514.4 V517"/></g>
  <!-- curve icon -->
  <path d="M753,527 C755.5,527 756,519.6 758.6,519.6 C761.2,519.6 761.6,527 764.4,527" fill="none" stroke="#d9737d" stroke-width="1.1"/><path d="M762.4,530 L766.4,526" stroke="#f0f0f0" stroke-width="1.2"/>
  <!-- playback -->
  <g fill="#f2f2f2"><g transform="translate(0,1)"><rect x="841.6" y="501" width="1.4" height="8.6"/><polygon points="848.4,501.4 848.4,509.2 843.6,505.3"/><polygon points="853.6,501.4 853.6,509.2 848.8,505.3"/><rect x="844" y="500" width="10" height="1" />
    <polygon points="866.4,501.4 866.4,509.2 860.8,505.3"/><rect x="867.6" y="501.4" width="1.6" height="7.8"/><rect x="870.6" y="501.4" width="1.6" height="7.8"/><rect x="861" y="500" width="11.6" height="1"/></g>
    <rect x="841.6" y="519.4" width="1.2" height="7.6"/><polygon points="847.2,519.8 847.2,526.6 843,523.2"/><polygon points="848.6,519.8 848.6,526.6 852.8,523.2"/><rect x="853.2" y="519.4" width="1.2" height="7.6"/>
  </g>
</svg>
<!-- listener -->
<div class="abs" style="left:0;top:497px;width:74px;height:33px;background:#3c3c3c"></div>
<div class="abs" style="left:2px;top:498px;width:70px;height:16px;background:#e6c9c9"></div>
<div class="abs" style="left:2px;top:515px;width:70px;height:15px;background:#fdfdfd;color:#111;font-family:'Liberation Mono',monospace;font-size:7.2px;font-weight:bold;line-height:15px;padding-left:3px;white-space:nowrap;overflow:hidden;letter-spacing:0px"><span class="t">Welcome to MAX:</span></div>
<!-- status -->
<div class="abs sbox" style="left:77px;top:499px;width:285px;height:17px;line-height:15px"><span class="t">None Selected</span></div>
<div class="abs sbox" style="left:77px;top:518px;width:508px;height:14px;line-height:14px"><span class="t">Click and drag to select and move objects</span></div>
<div class="abs lbl" style="left:422px;top:502px">X:</div>
<div class="abs fld" style="left:430px;top:499px;width:42px;height:15px"></div>
<div class="abs lbl" style="left:483px;top:502px">Y:</div>
<div class="abs fld" style="left:490px;top:499px;width:42px;height:15px"></div>
<div class="abs lbl" style="left:543px;top:502px">Z:</div>
<div class="abs fld" style="left:550px;top:499px;width:42px;height:15px"></div>
<div class="abs sbox" style="left:603px;top:499px;width:73px;height:17px;line-height:14px"><span class="t">Grid = 10.0mm</span></div>
<div class="abs sbox" style="left:603px;top:518px;width:73px;height:13px;line-height:12px"><span class="t">Add Time Tag</span></div>
<div class="abs" style="left:678px;top:498px;width:1px;height:32px;background:#303030"></div>
<div class="abs" style="left:708px;top:498px;width:1px;height:32px;background:#303030"></div>
<div class="abs btn" style="left:712px;top:498px;width:37px;height:17px;line-height:17px;white-space:nowrap"><span class="t">Auto Key</span></div>
<div class="abs btn" style="left:712px;top:517px;width:37px;height:14px;line-height:12px;white-space:nowrap"><span class="t">Set Key</span></div>
<div class="abs dd" style="left:751px;top:499px;width:83px;height:14px;border-color:#3a3a3a #777 #777 #3a3a3a;font-size:8.1px;letter-spacing:0;line-height:13.5px"><span class="t">Selected</span></div>
<div class="abs btn" style="left:751px;top:517px;width:18px;height:14px;background:none"></div>
<div class="abs btn" style="left:770px;top:517px;width:64px;height:14px;line-height:12px;white-space:nowrap"><span class="t">Key Filters...</span></div>
<div class="abs fld" style="left:858px;top:517px;width:20px;height:14px;color:#ddd;font-size:9px;line-height:11px;padding-left:2px"><span class="t">0</span></div>
<div class="abs" style="left:733px;top:496px;width:32px;height:1px;background:#2c2c2c"></div>


</div>
</body>
</html>
